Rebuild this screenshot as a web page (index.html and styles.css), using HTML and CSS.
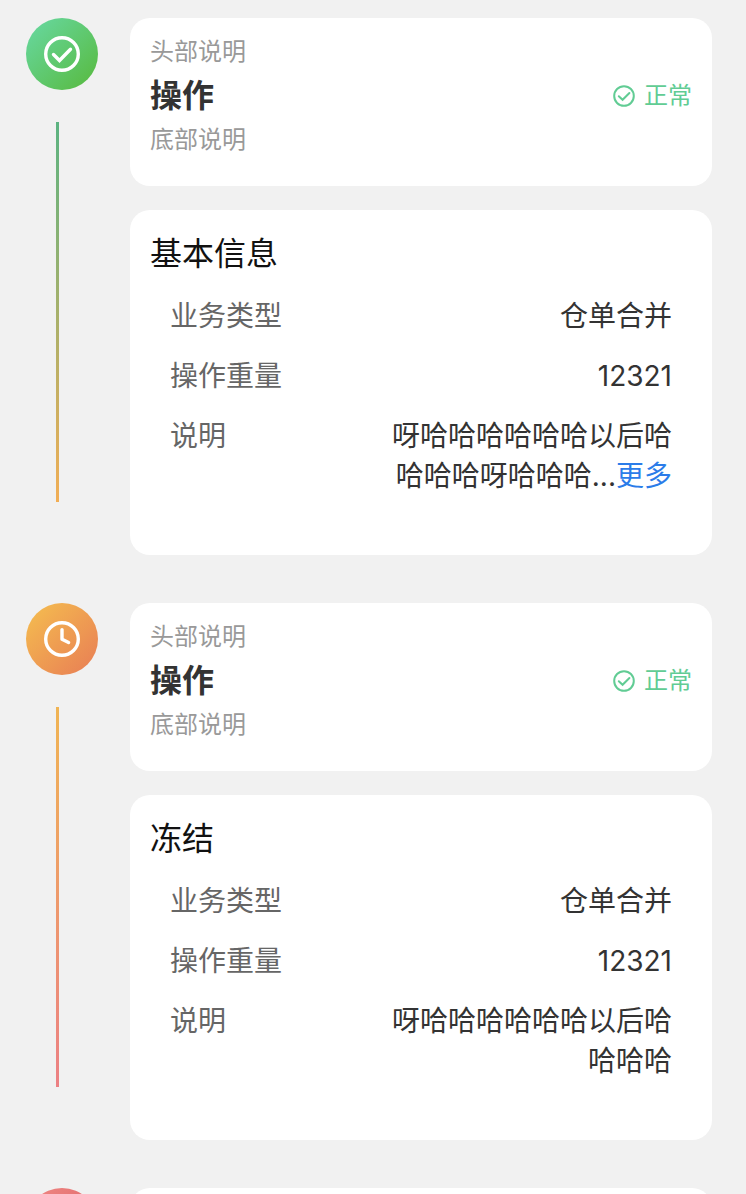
FILE: index.html
```html
<!DOCTYPE html>
<html lang="zh-CN">
<head>
  <meta charset="UTF-8">
  <meta name="viewport" content="width=device-width, initial-scale=1.0">
  <title>操作记录</title>
  <link rel="stylesheet" href="styles.css">
</head>
<body>
  <main class="steps">
    <section class="step">
      <div class="side">
        <div class="dot dot-success">
          <svg class="dot-icon" viewBox="0 0 36 36" fill="none" stroke="currentColor" stroke-width="3.4">
            <circle cx="18" cy="18" r="16.3"/>
            <path d="M9.5 18.5l6 6L26.5 13.2" stroke-linecap="round"/>
          </svg>
        </div>
        <div class="line line-success"></div>
      </div>
      <div class="content">
        <div class="card head">
          <div class="head-text">
            <div class="desc">头部说明</div>
            <h2 class="name">操作</h2>
            <div class="desc">底部说明</div>
          </div>
          <div class="status">
            <svg class="status-icon" viewBox="0 0 22 22" fill="none" stroke="currentColor" stroke-width="2">
              <circle cx="11" cy="11" r="9.8"/>
              <path d="M5.8 11.2l3.8 3.6 6.8-6.8" stroke-linecap="round"/>
            </svg>
            <span>正常</span>
          </div>
        </div>
        <div class="card info">
          <h3 class="title">基本信息</h3>
          <dl class="rows">
            <div class="row">
              <dt>业务类型</dt>
              <dd>仓单合并</dd>
            </div>
            <div class="row">
              <dt>操作重量</dt>
              <dd>12321</dd>
            </div>
            <div class="row">
              <dt>说明</dt>
              <dd>呀哈哈哈哈哈哈以后哈哈哈哈呀哈哈哈...<a class="more" href="#">更多</a></dd>
            </div>
          </dl>
        </div>
      </div>
    </section>

    <section class="step">
      <div class="side">
        <div class="dot dot-warning">
          <svg class="dot-icon" viewBox="0 0 36 36" fill="none" stroke="currentColor" stroke-width="3.4">
            <circle cx="18" cy="18" r="16.3"/>
            <path d="M18 8.6v9.6l6.6 3.3" stroke-linecap="round" stroke-linejoin="round"/>
          </svg>
        </div>
        <div class="line line-warning"></div>
      </div>
      <div class="content">
        <div class="card head">
          <div class="head-text">
            <div class="desc">头部说明</div>
            <h2 class="name">操作</h2>
            <div class="desc">底部说明</div>
          </div>
          <div class="status">
            <svg class="status-icon" viewBox="0 0 22 22" fill="none" stroke="currentColor" stroke-width="2">
              <circle cx="11" cy="11" r="9.8"/>
              <path d="M5.8 11.2l3.8 3.6 6.8-6.8" stroke-linecap="round"/>
            </svg>
            <span>正常</span>
          </div>
        </div>
        <div class="card info">
          <h3 class="title">冻结</h3>
          <dl class="rows">
            <div class="row">
              <dt>业务类型</dt>
              <dd>仓单合并</dd>
            </div>
            <div class="row">
              <dt>操作重量</dt>
              <dd>12321</dd>
            </div>
            <div class="row">
              <dt>说明</dt>
              <dd>呀哈哈哈哈哈哈以后哈哈哈哈</dd>
            </div>
          </dl>
        </div>
      </div>
    </section>

    <section class="step">
      <div class="side">
        <div class="dot dot-danger"></div>
      </div>
      <div class="content">
        <div class="card head"></div>
      </div>
    </section>
  </main>
</body>
</html>
```
FILE: styles.css
```css
* {
  box-sizing: border-box;
}
body {
  margin: 0;
  background-color: #f1f1f1;
  font-family: Inter, "Noto Sans CJK SC", sans-serif;
  color: #333;
}
.steps {
  height: 100vh;
  overflow: hidden;
  padding: 18px 34px 0 26px;
}
.step {
  display: flex;
  gap: 32px;
  padding-bottom: 48px;
}
.side {
  display: flex;
  flex-direction: column;
  flex: none;
  gap: 32px;
  width: 72px;
}
.dot {
  display: flex;
  align-items: center;
  justify-content: center;
  height: 72px;
  border-radius: 50%;
  color: #fff;
}
.dot-success {
  background: linear-gradient(135deg, #68d9a4, #57b93c);
}
.dot-warning {
  background: linear-gradient(135deg, #f5bf4f, #e87c55);
}
.dot-danger {
  background: linear-gradient(135deg, #f08a86, #d9575c);
}
.dot-icon {
  width: 36px;
  height: 36px;
}
.line {
  width: 3px;
  height: 380px;
  margin-left: 30px;
}
.line-success {
  background: linear-gradient(#5bb381, #f2ae55);
}
.line-warning {
  background: linear-gradient(#f0b453, #ec8084);
}
.content {
  display: flex;
  flex-direction: column;
  flex: 1;
  gap: 24px;
  min-width: 0;
}
.card {
  border-radius: 20px;
  background: #fff;
}
.head {
  display: flex;
  align-items: center;
  justify-content: space-between;
  min-height: 168px;
  padding: 12px 20px 24px;
}
.desc {
  font-size: 24px;
  line-height: 44px;
  color: #999;
}
.name {
  margin: 0;
  font-size: 32px;
  line-height: 44px;
}
.status {
  display: flex;
  align-items: center;
  gap: 9px;
  font-size: 24px;
  line-height: 44px;
  color: #61cc94;
}
.status-icon {
  width: 22px;
  height: 22px;
}
.info {
  padding: 21px 20px 59px;
}
.title {
  margin: 0 0 20px;
  font-size: 32px;
  font-weight: normal;
  line-height: 45px;
  color: #111;
}
.rows {
  display: flex;
  flex-direction: column;
  gap: 20px;
  margin: 0;
  padding: 0 20px;
  font-size: 28px;
  line-height: 40px;
}
.row {
  display: flex;
  justify-content: space-between;
}
.row dt {
  color: #666;
}
.row dd {
  width: 60%;
  margin: 0;
  text-align: right;
}
.more {
  color: #2b7ce9;
  text-decoration: none;
}
```
